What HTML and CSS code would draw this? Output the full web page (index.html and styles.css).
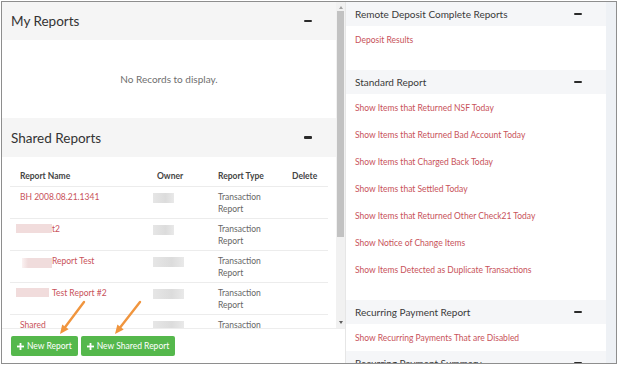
FILE: index.html
```html
<!DOCTYPE html>
<html lang="en">
<head>
    <meta charset="UTF-8">
    <title>Reports</title>
    <link rel="stylesheet" href="styles.css">
</head>
<body>
    <div class="frame">
        <div class="left">
            <div class="scroll">
                <div class="scroll-content">
                    <div class="panel-head">
                        <span class="panel-title">My Reports</span>
                        <span class="minus"></span>
                    </div>
                    <div class="empty">No Records to display.</div>

                    <div class="panel-head panel-head-tall">
                        <span class="panel-title">Shared Reports</span>
                        <span class="minus"></span>
                    </div>
                    <table class="reports">
                        <tr>
                            <th class="col-name">Report Name</th>
                            <th class="col-owner">Owner</th>
                            <th class="col-type">Report Type</th>
                            <th class="col-del">Delete</th>
                        </tr>
                        <tr>
                            <td><a href="#">BH 2008.08.21.1341</a></td>
                            <td><span class="owner-blur"></span></td>
                            <td>Transaction<br>Report</td>
                            <td></td>
                        </tr>
                        <tr>
                            <td><a href="#"><span class="name-blur name-blur-a"></span>t2</a></td>
                            <td><span class="owner-blur"></span></td>
                            <td>Transaction<br>Report</td>
                            <td></td>
                        </tr>
                        <tr>
                            <td><a href="#"><span class="name-blur name-blur-b"></span>Report Test</a></td>
                            <td><span class="owner-blur owner-wide"></span></td>
                            <td>Transaction<br>Report</td>
                            <td></td>
                        </tr>
                        <tr>
                            <td><a href="#"><span class="name-blur name-blur-c"></span>Test Report #2</a></td>
                            <td><span class="owner-blur owner-wide"></span></td>
                            <td>Transaction<br>Report</td>
                            <td></td>
                        </tr>
                        <tr>
                            <td><a href="#">Shared</a></td>
                            <td><span class="owner-blur owner-wide"></span></td>
                            <td>Transaction<br>Report</td>
                            <td></td>
                        </tr>
                    </table>
                </div>
                <div class="scrollbar">
                    <span class="arrow-up"></span>
                    <span class="thumb"></span>
                    <span class="arrow-down"></span>
                </div>
            </div>
            <div class="btn-bar">
                <a class="btn" href="#"><svg width="7" height="7" viewBox="0 0 7 7"><rect x="2.6" y="0" width="1.8" height="7" fill="#fff"/><rect x="0" y="2.6" width="7" height="1.8" fill="#fff"/></svg>New Report</a>
                <a class="btn" href="#"><svg width="7" height="7" viewBox="0 0 7 7"><rect x="2.6" y="0" width="1.8" height="7" fill="#fff"/><rect x="0" y="2.6" width="7" height="1.8" fill="#fff"/></svg>New Shared Report</a>
            </div>
        </div>

        <div class="right">
            <div class="right-inner">
                <div class="group">
                    <div class="group-head"><span>Remote Deposit Complete Reports</span><span class="minus"></span></div>
                    <ul class="links">
                        <li><a href="#">Deposit Results</a></li>
                    </ul>
                </div>
                <div class="group">
                    <div class="group-head"><span>Standard Report</span><span class="minus"></span></div>
                    <ul class="links">
                        <li><a href="#">Show Items that Returned NSF Today</a></li>
                        <li><a href="#">Show Items that Returned Bad Account Today</a></li>
                        <li><a href="#">Show Items that Charged Back Today</a></li>
                        <li><a href="#">Show Items that Settled Today</a></li>
                        <li><a href="#">Show Items that Returned Other Check21 Today</a></li>
                        <li><a href="#">Show Notice of Change Items</a></li>
                        <li><a href="#">Show Items Detected as Duplicate Transactions</a></li>
                    </ul>
                </div>
                <div class="group">
                    <div class="group-head"><span>Recurring Payment Report</span><span class="minus"></span></div>
                    <ul class="links links-short">
                        <li><a href="#">Show Recurring Payments That are Disabled</a></li>
                    </ul>
                </div>
                <div class="group">
                    <div class="group-head"><span>Recurring Payment Summary</span><span class="minus"></span></div>
                </div>
            </div>
        </div>
    </div>

    <!-- callout arrows pointing at the two buttons -->
    <svg class="callouts" width="620" height="366" viewBox="0 0 620 366">
        <line x1="84" y1="302" x2="65.4" y2="326.8" stroke="#f0953e" stroke-width="2.4" stroke-linecap="round"/>
        <polygon points="60,334 68.6,329.2 62.2,324.4" fill="#f0953e"/>
        <line x1="140" y1="302" x2="120.5" y2="326.9" stroke="#f0953e" stroke-width="2.4" stroke-linecap="round"/>
        <polygon points="115,334 123.7,329.4 117.4,324.4" fill="#f0953e"/>
    </svg>
</body>
</html>
```

FILE: styles.css
```css
* {
    margin: 0;
    padding: 0;
    box-sizing: border-box;
}

body {
    font-family: 'Lato', 'Open Sans', sans-serif;
    color: #333;
    background: #fff;
    position: relative;
    width: 620px;
    height: 366px;
    overflow: hidden;
}

a {
    text-decoration: none;
    color: #c8525a;
}

.frame {
    margin: 1px;
    width: 616px;
    height: 363px;
    border: 1px solid #8e8e8e;
    display: flex;
    overflow: hidden;
}

/* left column */

.left {
    width: 343px;
    display: flex;
    flex-direction: column;
}

.scroll {
    flex: 1;
    display: flex;
    overflow: hidden;
}

.scroll-content {
    flex: 1;
    overflow: hidden;
}

.panel-head {
    height: 38px;
    background: #f5f5f5;
    display: flex;
    align-items: center;
    justify-content: space-between;
    padding: 0 24px 0 9px;
}

.panel-head-tall {
    height: 39px;
}

.panel-title {
    font-size: 13.5px;
    color: #333;
}

.minus {
    width: 8px;
    height: 2.5px;
    background: #2a2a2a;
    border-radius: 1px;
}

.empty {
    height: 78px;
    line-height: 78px;
    text-align: center;
    font-size: 10px;
    color: #6f6f6f;
}

.reports {
    border-collapse: collapse;
    margin: 9px 8px 0 8px;
    width: 318px;
    table-layout: fixed;
    font-size: 8.5px;
}

.reports th {
    height: 20px;
    text-align: left;
    font-weight: 700;
    color: #444;
    padding: 0 10px;
    border-bottom: 1px solid #ececec;
}

.reports .col-name { width: 137px; }
.reports .col-owner { width: 61px; }
.reports .col-type { width: 74px; }
.reports .col-del { width: 46px; }

.reports td {
    height: 32px;
    vertical-align: top;
    padding: 4px 10px 0 10px;
    line-height: 12px;
    color: #666;
    border-bottom: 1px solid #ececec;
    white-space: nowrap;
}

.owner-blur {
    display: block;
    width: 21px;
    height: 10px;
    margin: 2px 0 0 -4px;
    background: linear-gradient(90deg, #e6e6e6, #dcdcdc 60%, #e9e9e9);
}

.owner-wide {
    width: 31px;
}

.name-blur {
    display: inline-block;
    height: 9px;
    vertical-align: -1px;
    background: #f1dcdc;
}

.name-blur-a {
    width: 36px;
    margin-left: -4px;
}

.name-blur-b {
    width: 30px;
    height: 10px;
    vertical-align: -4px;
    margin-left: 2px;
    background: linear-gradient(90deg, #fbf2f2, #f0dcdc 20%, #f0dcdc);
}

.name-blur-c {
    width: 33px;
    height: 9px;
    margin-left: -4px;
    margin-right: 3px;
}

.scrollbar {
    width: 9px;
    background: #f1f1f1;
    position: relative;
    display: flex;
    flex-direction: column;
    align-items: center;
}

.thumb {
    margin-top: 2px;
    width: 7px;
    height: 226px;
    background: #c2c2c2;
}

.arrow-up,
.arrow-down {
    width: 0;
    height: 0;
    border-left: 2.5px solid transparent;
    border-right: 2.5px solid transparent;
}

.arrow-up {
    margin-top: 4px;
    border-bottom: 3px solid #a3a3a3;
}

.arrow-down {
    margin-top: auto;
    margin-bottom: 4px;
    border-top: 3px solid #606060;
}

.btn-bar {
    height: 35px;
    border-top: 1px solid #ededed;
    display: flex;
    gap: 3px;
    padding: 7px 0 0 9px;
}

.btn {
    height: 20px;
    display: flex;
    align-items: center;
    gap: 3px;
    padding: 0 6px 0 6px;
    background: #55b84c;
    border-radius: 2px;
    color: #fff;
    font-size: 8.5px;
}

/* right column */

.right {
    flex: 1;
    background: #eef1f5;
    border-left: 1px solid #e6e6e6;
    padding-right: 10px;
}

.right-inner {
    background: #fff;
    height: 100%;
}

.group-head {
    height: 24px;
    background: #f5f6f8;
    display: flex;
    align-items: center;
    justify-content: space-between;
    padding: 0 24px 0 9px;
    font-size: 10px;
    color: #3a3a3a;
}

.links {
    list-style: none;
    padding-bottom: 17px;
}

.links-short {
    padding-bottom: 0;
}

.links li {
    height: 27px;
    line-height: 28px;
    padding-left: 9px;
    font-size: 8.5px;
}

.callouts {
    position: absolute;
    top: 0;
    left: 0;
    pointer-events: none;
}
```
